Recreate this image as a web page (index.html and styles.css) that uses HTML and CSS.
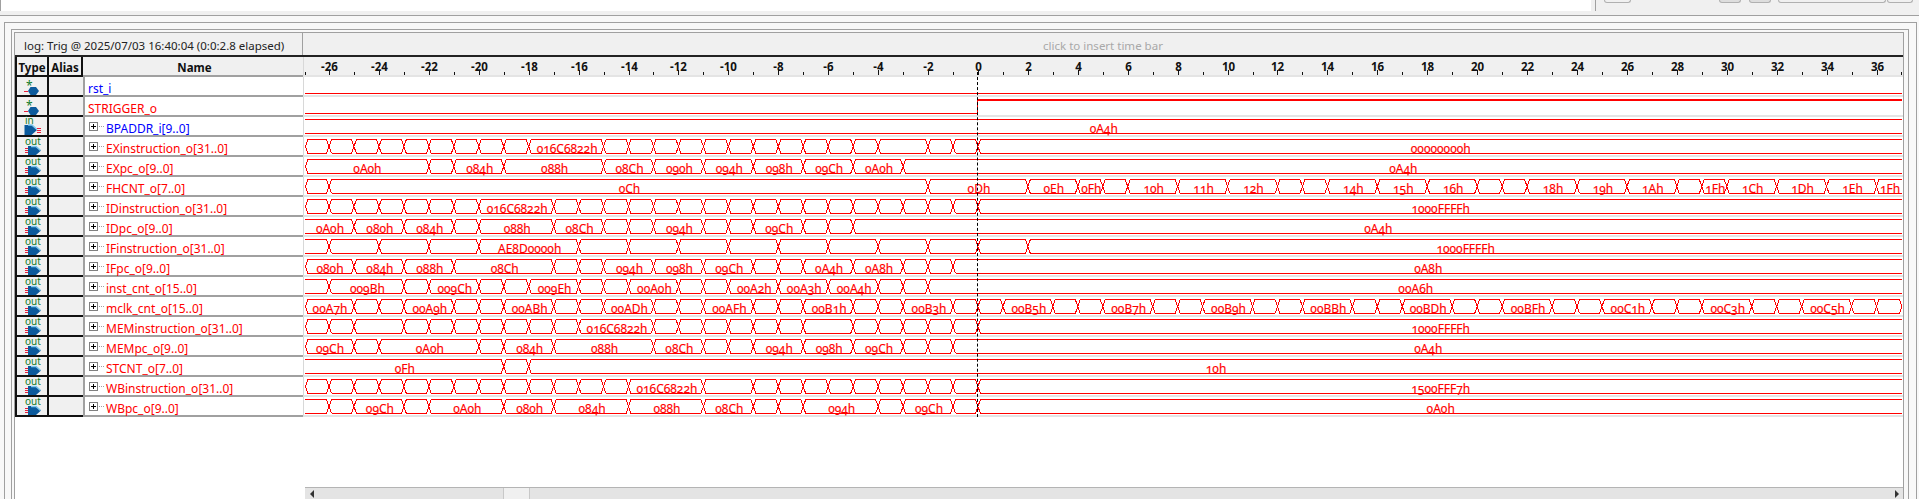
FILE: index.html
```html
<!DOCTYPE html>
<html lang="en">
<head>
  <meta charset="UTF-8">
  <title>Waveform viewer</title>
  <link rel="stylesheet" href="styles.css">
</head>
<body>

  <div class="topbar">
    <div class="top-left"></div>
    <div class="top-right">
      <span class="stub stub-a"></span>
      <span class="stub stub-b"></span>
      <span class="stub stub-c"></span>
      <span class="stub stub-d"></span>
      <span class="stub stub-e"></span>
    </div>
  </div>

  <div class="shell">
    <div class="frame-outer">
      <div class="frame-mid">
        <div class="viewer">

          <div class="viewer-head">
            <div class="log-info">log: Trig @ 2025/07/03 16:40:04 (0:0:2.8 elapsed)</div>
            <div class="time-bar-hint">click to insert time bar</div>
          </div>

          <div class="row row-head">
            <div class="cell cell-type">Type</div>
            <div class="cell cell-alias">Alias</div>
            <div class="cell cell-name">Name</div>
            <div class="cell cell-wave"><svg id="ruler" class="wave" width="1597" height="18"></svg></div>
          </div>

          <div id="rows"></div>

          <div class="cursor"></div>

          <div class="spacer"></div>
          <div class="scrollbar">
            <span class="sb-btn sb-left"></span>
            <span class="sb-thumb"></span>
            <span class="sb-track"></span>
            <span class="sb-btn sb-right"></span>
          </div>

        </div>
      </div>
    </div>
  </div>

<script src="script.js"></script>
</body>
</html>
```

FILE: styles.css
```css
body { margin: 0; height: 100vh; overflow: hidden; display: flex; flex-direction: column; background: #f0f0f0; font-family: "Noto Sans", sans-serif; font-size: 12px; }

.topbar { height: 11px; display: flex; flex: none; }
.top-left { width: 1590px; background: #fff; border-left: 1px solid #a0a0a0; }
.top-right { flex: 1; display: flex; align-items: flex-start; margin-left: 4px; padding-left: 8px; border-left: 1px solid #a0a0a0; }
.stub { height: 3px; border: 1px solid #b0b0b0; border-top: none; border-radius: 0 0 4px 4px; box-sizing: border-box; }
.stub-a { width: 27px; margin-right: 88px; }
.stub-b { width: 22px; margin-right: 8px; background: #ddd; }
.stub-c { width: 22px; margin-right: 7px; background: #ddd; }
.stub-d { width: 108px; margin-right: 1px; }
.stub-e { width: 26px; }

.shell { flex: 1; min-height: 0; display: flex; margin-top: 4px; border-top: 1px solid #a0a0a0; background: #f8f8f8; padding: 6px 2px 0 4px; }
.frame-outer { flex: 1; display: flex; border: 1px solid #a0a0a0; border-bottom: none; padding: 6px 7px 0 6px; }
.frame-mid { flex: 1; display: flex; border: 1px solid #a0a0a0; border-bottom: none; padding: 2px 4px 0 2px; }
.viewer { flex: 1; position: relative; display: flex; flex-direction: column; border: 1px solid #a0a0a0; border-bottom: none; background: #fff; }

.viewer-head { height: 24px; flex: none; display: flex; box-sizing: border-box; background: #f0f0f0; border-bottom: 2px solid #222; }
.log-info { width: 288px; box-sizing: border-box; padding: 5px 0 0 9px; border-right: 1px solid #a0a0a0; font-size: 11.5px; color: #222; white-space: nowrap; }
.time-bar-hint { flex: 1; text-align: center; padding: 5px 0 0; color: #a8a8a8; font-size: 11.5px; }

.row { height: 20px; flex: none; display: grid; grid-template-columns: 34px 34px 220px 1fr; }
.cell { box-sizing: border-box; height: 20px; display: flex; align-items: center; overflow: visible; }
.cell-type, .cell-alias { background: #f0f0f0; border-bottom: 2px solid #111; justify-content: center; }
.cell-type { border-left: 2px solid #111; border-right: 2px solid #111; }
.cell-name { border-left: 2px solid #a0a0a0; border-bottom: 2px solid #a0a0a0; padding-left: 3px; white-space: nowrap; font-size: 12px; }
.sig-name { padding-top: 4px; }
.cell-wave { border-left: 1px solid #d8d8d8; padding-left: 1px; border-bottom: 2px solid #e4e4e4; align-items: flex-start; }

.row-head .cell { font-weight: bold; color: #111; font-size: 11.5px; padding-top: 3px; }
.row-head .cell-alias { border-right: 2px solid #111; }
.row-head .cell-name { border-left: none; justify-content: center; background: #f0f0f0; }
.row-head .cell-wave { background: #f0f0f0; padding-top: 0; }

.type-icon { width: 18px; height: 22px; flex: none; align-self: flex-end; }
.icon-text { font-family: "Noto Sans", sans-serif; font-size: 10px; fill: #0f7a2a; }
.icon-star { font-size: 12px; }
.plus { width: 16px; height: 9px; margin: 1px 1px 0 1px; flex: none; }
.sig-in { color: #0000ff; }
.sig-out { color: #ff0000; }

.wave { display: block; overflow: visible; }
.trace { fill: none; stroke: #f00; stroke-width: 1; }
.trace-thick { stroke-width: 2; }
.value { fill: #f00; stroke: #f00; stroke-width: 0.15; font-size: 12px; text-anchor: middle; font-variant-numeric: oldstyle-nums; }
.tick { stroke: #111; stroke-width: 1; }
.tick-label { fill: #111; font-size: 11.5px; text-anchor: middle; }

.cursor { position: absolute; left: 962px; top: 39px; height: 345px; border-left: 1px dashed #000; }

.spacer { flex: 1; }
.scrollbar { height: 12px; flex: none; margin-left: 290px; display: flex; box-sizing: border-box; border-top: 1px solid #b4b4b4; background: #e4e4e4; }
.sb-btn { width: 13px; position: relative; }
.sb-left::after, .sb-right::after { content: ""; position: absolute; top: 2px; border: 4px solid transparent; }
.sb-left::after { left: 1px; border-right-color: #333; }
.sb-right::after { left: 5px; border-left-color: #333; }
.sb-thumb { width: 27px; margin-left: 185px; background: #f0f0f0; border-left: 1px solid #c8c8c8; border-right: 1px solid #c8c8c8; box-sizing: border-box; }
.sb-track { flex: 1; }
```

FILE: script.js
```js
// pixels per time unit, and where t = -26 sits inside a wave svg
const UNIT = 24.96;
const ORIGIN = 24;
const HIGH = 2.5;
const LOW = 16.5;

const ICONS = {
  wire: `<text x="3" y="13" class="icon-text icon-star">*</text>
    <path d="M5 14l2.500-4h5.500l3 4l-3 4h-5.500z" fill="#0b5a9c"/>
    <path d="M1 14.500h4" stroke="#e8203a" fill="none"/>`,
  in: `<text x="2" y="7" class="icon-text">in</text>
    <path d="M1.500 8h7l5.500 5l-5.500 5h-7z" fill="#0b5a9c"/>
    <path d="M5 8h4l5 4.500" stroke="#7cc8ee" stroke-width="1.500" fill="none"/>
    <path d="M14 11.500h4M14 13.500h4M14 15.500h4" stroke="#e8203a" fill="none"/>`,
  out: `<text x="2" y="8" class="icon-text">out</text>
    <path d="M5 9h8l5 4.500l-5 4.500h-8z" fill="#0b5a9c"/>
    <path d="M8 9.500h5l4.500 4" stroke="#7cc8ee" stroke-width="1.500" fill="none"/>
    <path d="M2 11.500h3M2 13.500h3M2 15.500h3" stroke="#e8203a" fill="none"/>`
};

const PLUS = `<svg class="plus">
  <rect x="0.500" y="0.500" width="8" height="8" fill="#fff" stroke="#808080"/>
  <path d="M2 4.500h5M4.500 2v5" stroke="#000" fill="none"/>
  <path d="M10 4.500h5" stroke="#a0a0a0" stroke-dasharray="1 1" fill="none"/>
</svg>`;

function tx(t) {
  return ORIGIN + (t + 26) * UNIT;
}

// run of one-unit cells without a label, from a up to b
function blanks(a, b) {
  const out = [];
  for (let t = a; t <= b; t++) out.push([t]);
  return out;
}

// Each bus is a list of [end time, label]; the first value starts at -27.
// slant = the trace starts with a crossing at the left edge.
const SIGNALS = [
  { name: "rst_i", dir: "in", wire: "low" },
  { name: "STRIGGER_o", dir: "out", wire: "rise" },
  { name: "BPADDR_i[9..0]", dir: "in", bus: [[37, "0A4h"]] },
  { name: "EXinstruction_o[31..0]", slant: true, bus: [...blanks(-26, -18), [-15, "016C6822h"], ...blanks(-14, -4), [-2], [-1], [0], [37, "00000000h"]] },
  { name: "EXpc_o[9..0]", slant: true, bus: [[-22, "0A0h"], [-21], [-19, "084h"], [-15, "088h"], [-13, "08Ch"], [-11, "090h"], [-9, "094h"], [-7, "098h"], [-5, "09Ch"], [-3, "0A0h"], [37, "0A4h"]] },
  { name: "FHCNT_o[7..0]", slant: true, bus: [[-26], [-2, "0Ch"], [2, "0Dh"], [4, "0Eh"], [5, "0Fh"], [6], [8, "10h"], [10, "11h"], [12, "12h"], [13], [14], [16, "14h"], [18, "15h"], [20, "16h"], [21], [22], [24, "18h"], [26, "19h"], [28, "1Ah"], [29], [30, "1Fh"], [32, "1Ch"], [34, "1Dh"], [36, "1Eh"], [37, "1Fh"]] },
  { name: "IDinstruction_o[31..0]", slant: true, bus: [...blanks(-26, -20), [-17, "016C6822h"], ...blanks(-16, 0), [37, "1000FFFFh"]] },
  { name: "IDpc_o[9..0]", bus: [[-25, "0A0h"], [-23, "080h"], [-21, "084h"], [-20], [-17, "088h"], [-15, "08Ch"], [-14], [-13], [-11, "094h"], [-10], [-9], [-7, "09Ch"], [-6], [-5], [37, "0A4h"]] },
  { name: "IFinstruction_o[31..0]", bus: [[-26], [-24], [-22], [-20], [-16, "AE8D0000h"], [-14], [-12], [-10], [-8], [-6], [-4], [-2], [0], [2], [37, "1000FFFFh"]] },
  { name: "IFpc_o[9..0]", slant: true, bus: [[-25, "080h"], [-23, "084h"], [-21, "088h"], [-17, "08Ch"], [-16], [-15], [-13, "094h"], [-11, "098h"], [-9, "09Ch"], [-8], [-7], [-5, "0A4h"], [-3, "0A8h"], [-2], [-1], [37, "0A8h"]] },
  { name: "inst_cnt_o[15..0]", bus: [[-26], [-23, "009Bh"], [-22], [-20, "009Ch"], [-19], [-18], [-16, "009Eh"], [-15], [-14], [-12, "00A0h"], [-11], [-10], [-8, "00A2h"], [-6, "00A3h"], [-4, "00A4h"], [-3], [-2], [37, "00A6h"]] },
  { name: "mclk_cnt_o[15..0]", slant: true, bus: [[-25, "00A7h"], [-24], [-23], [-21, "00A9h"], [-20], [-19], [-17, "00ABh"], [-16], [-15], [-13, "00ADh"], [-12], [-11], [-9, "00AFh"], [-8], [-7], [-5, "00B1h"], [-4], [-3], [-1, "00B3h"], [0], [1], [3, "00B5h"], [4], [5], [7, "00B7h"], [8], [9], [11, "00B9h"], [12], [13], [15, "00BBh"], [16], [17], [19, "00BDh"], [20], [21], [23, "00BFh"], [24], [25], [27, "00C1h"], [28], [29], [31, "00C3h"], [32], [33], [35, "00C5h"], [36], [37]] },
  { name: "MEMinstruction_o[31..0]", slant: true, bus: [[-26], [-25], ...blanks(-23, -16), [-13, "016C6822h"], ...blanks(-12, -7), ...blanks(-5, 0), [37, "1000FFFFh"]] },
  { name: "MEMpc_o[9..0]", slant: true, bus: [[-25, "09Ch"], [-24], [-20, "0A0h"], [-19], [-17, "084h"], [-13, "088h"], [-11, "08Ch"], [-10], [-9], [-7, "094h"], [-5, "098h"], [-3, "09Ch"], [-2], [-1], [37, "0A4h"]] },
  { name: "STCNT_o[7..0]", bus: [[-19, "0Fh"], [-18], [37, "10h"]] },
  { name: "WBinstruction_o[31..0]", slant: true, bus: [...blanks(-26, -14), [-11, "016C6822h"], [-9], ...blanks(-8, 0), [37, "1500FFF7h"]] },
  { name: "WBpc_o[9..0]", bus: [[-26], [-25], [-23, "09Ch"], [-22], [-19, "0A0h"], [-17, "080h"], [-14, "084h"], [-11, "088h"], [-9, "08Ch"], [-8], [-7], [-4, "094h"], [-3], [-1, "09Ch"], [0], [37, "0A0h"]] }
];

function wireSvg(type) {
  if (type === "low") {
    return `<path class="trace" d="M0 ${LOW}H1597"/>`;
  }
  const x = Math.round(tx(0)) - 0.5;
  return `<path class="trace" d="M0 ${LOW}H${x}V${HIGH}"/><path class="trace trace-thick" d="M${x} 3H1597"/>`;
}

function busSvg(sig) {
  let d = "";
  let labels = "";
  let start = -27;
  let from = sig.slant ? 0.5 : null;

  if (from !== null) {
    d += `M${from} ${(HIGH + LOW) / 2}L${from + 2.5} ${HIGH}M${from} ${(HIGH + LOW) / 2}L${from + 2.5} ${LOW}`;
  }

  sig.bus.forEach(([end, label]) => {
    const a = from === null ? 0 : from + 2.5;
    const b = tx(end);
    const stop = end >= 37 && !label ? b - 2 : b - 2.5;
    const last = end >= 37 && label;
    d += `M${a} ${HIGH}H${last ? 1597 : stop}M${a} ${LOW}H${last ? 1597 : stop}`;
    if (!last) {
      d += end >= 37
        ? `M${stop} ${HIGH}L${stop + 2.5} ${(HIGH + LOW) / 2}L${stop} ${LOW}`
        : `M${b - 2.5} ${HIGH}L${b + 2.5} ${LOW}M${b - 2.5} ${LOW}L${b + 2.5} ${HIGH}`;
    }
    if (label) {
      const mid = (tx(start) + tx(end)) / 2 + 1;
      labels += `<text class="value" x="${mid}" y="16">${label}</text>`;
    }
    start = end;
    from = b;
  });

  return `<path class="trace" d="${d}" shape-rendering="crispEdges"/>${labels}`;
}

function rowHtml(sig) {
  const isWire = sig.wire !== undefined;
  const dir = sig.dir || "out";
  const icon = isWire ? "wire" : dir;
  const wave = isWire ? wireSvg(sig.wire) : busSvg(sig);
  return `<div class="row">
    <div class="cell cell-type"><svg class="type-icon" viewBox="0 -4 18 22">${ICONS[icon]}</svg></div>
    <div class="cell cell-alias"></div>
    <div class="cell cell-name sig-${dir}">${isWire ? "" : PLUS}<span class="sig-name">${sig.name}</span></div>
    <div class="cell cell-wave"><svg class="wave" width="1597" height="18">${wave}</svg></div>
  </div>`;
}

function rulerHtml() {
  let out = `<path class="tick" d="M0.500 15v3"/>`;
  for (let t = -26; t <= 37; t++) {
    const x = Math.round(tx(t)) + 0.5;
    if (t % 2 === 0) {
      out += `<path class="tick" d="M${x} 13v5"/><text class="tick-label" x="${x}" y="14">${t}</text>`;
    } else {
      out += `<path class="tick" d="M${x} 15v3"/>`;
    }
  }
  return out;
}

document.getElementById("rows").innerHTML = SIGNALS.map(rowHtml).join("");
document.getElementById("ruler").innerHTML = rulerHtml();
```
